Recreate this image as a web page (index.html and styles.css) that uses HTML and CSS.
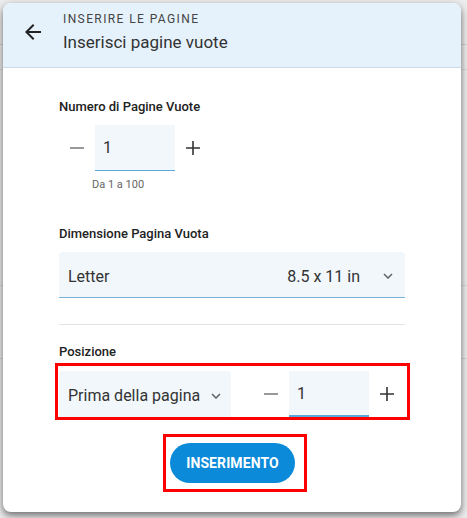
FILE: index.html
```html
<!DOCTYPE html>
<html lang="it">
<head>
<meta charset="utf-8">
<title>Inserisci pagine vuote</title>
<link rel="stylesheet" href="styles.css">
</head>
<body>
<div class="dialog">
  <header class="dialog-header">
    <button class="back-btn" aria-label="Indietro">
      <svg width="24" height="24" viewBox="0 0 24 24"><path d="M20 11H7.83l5.59-5.59L12 4l-8 8 8 8 1.41-1.41L7.83 13H20v-2z" fill="#222"/></svg>
    </button>
    <div class="header-text">
      <div class="overline">INSERIRE LE PAGINE</div>
      <div class="title">Inserisci pagine vuote</div>
    </div>
  </header>
  <div class="dialog-body">
    <div class="field-label label-first">Numero di Pagine Vuote</div>
    <div class="stepper">
      <button class="step-btn" aria-label="Meno">
        <svg width="14" height="14" viewBox="0 0 14 14"><path d="M0 7h14" stroke="#777" stroke-width="1.6"/></svg>
      </button>
      <div class="num-input"><span>1</span></div>
      <button class="step-btn" aria-label="Più">
        <svg width="14" height="14" viewBox="0 0 14 14"><path d="M0 7h14M7 0v14" stroke="#333" stroke-width="1.6"/></svg>
      </button>
    </div>
    <div class="hint">Da 1 a 100</div>

    <div class="field-label label-second">Dimensione Pagina Vuota</div>
    <div class="select select-wide">
      <span class="select-value">Letter</span>
      <span class="select-extra">8.5 x 11 in</span>
      <svg class="chev" width="10" height="6" viewBox="0 0 10 6"><path d="M1 1l4 4 4-4" stroke="#666" stroke-width="1.6" fill="none"/></svg>
    </div>

    <div class="divider"></div>

    <div class="field-label label-third">Posizione</div>
    <div class="highlight position-row">
      <div class="select select-narrow">
        <span class="select-value">Prima della pagina</span>
        <svg class="chev" width="10" height="6" viewBox="0 0 10 6"><path d="M1 1l4 4 4-4" stroke="#666" stroke-width="1.6" fill="none"/></svg>
      </div>
      <div class="stepper stepper-inline">
        <button class="step-btn" aria-label="Meno">
          <svg width="14" height="14" viewBox="0 0 14 14"><path d="M0 7h14" stroke="#777" stroke-width="1.6"/></svg>
        </button>
        <div class="num-input"><span>1</span></div>
        <button class="step-btn" aria-label="Più">
          <svg width="14" height="14" viewBox="0 0 14 14"><path d="M0 7h14M7 0v14" stroke="#333" stroke-width="1.6"/></svg>
        </button>
      </div>
    </div>

    <div class="actions">
      <div class="highlight btn-wrap">
        <button class="primary-btn">INSERIMENTO</button>
      </div>
    </div>
  </div>
</div>
</body>
</html>
```

FILE: styles.css
```css
* { box-sizing: border-box; }
html, body { margin: 0; padding: 0; }
body {
  width: 467px;
  height: 518px;
  overflow: hidden;
  font-family: Roboto, "Liberation Sans", sans-serif;
  background-color: #ececec;
  background-image:
    linear-gradient(#d4d4d4, #d4d4d4),
    linear-gradient(#d9d9d9, #d9d9d9),
    linear-gradient(#d9d9d9, #d9d9d9),
    linear-gradient(#d9d9d9, #d9d9d9);
  background-size: 100% 1px, 100% 1px, 100% 1px, 100% 1px;
  background-position: 0 44px, 0 69px, 0 285px, 0 358px;
  background-repeat: no-repeat;
  padding: 3px 0 0 3px;
}
button { font-family: inherit; border: 0; background: none; padding: 0; cursor: pointer; }

.dialog {
  width: 458px;
  height: 509px;
  background: #fff;
  border-radius: 8px;
  box-shadow: 0 3px 6px rgba(0,0,0,0.35), 0 4px 10px rgba(0,0,0,0.25);
  overflow: hidden;
  display: flex;
  flex-direction: column;
}

.dialog-header {
  height: 65px;
  background: #e5f2fc;
  border-bottom: 1px solid #c9dbe9;
  display: flex;
  align-items: flex-start;
  padding-top: 8px;
}
.back-btn {
  width: 24px;
  height: 24px;
  margin: 9px 0 0 18px;
  display: flex;
}
.header-text { margin-left: 18px; }
.overline {
  font-size: 12px;
  line-height: 16px;
  letter-spacing: 1.4px;
  color: #444;
}
.title {
  margin-top: 5px;
  font-size: 17px;
  line-height: 21px;
  color: #333;
}

.dialog-body {
  padding: 31px 56px 0 56px;
  display: flex;
  flex-direction: column;
}
.field-label {
  font-size: 13px;
  line-height: 16px;
  font-weight: 500;
  color: #222;
}
.label-second { margin-top: 34px; }
.label-third { margin-top: 19px; }

.stepper {
  display: flex;
  align-items: center;
  margin-top: 10px;
  height: 46px;
}
.step-btn {
  width: 36px;
  height: 46px;
  display: flex;
  align-items: center;
  justify-content: center;
}
.num-input {
  width: 80px;
  height: 46px;
  background: #f2f7fc;
  border-bottom: 1px solid #5aa9dc;
  display: flex;
  align-items: center;
  padding: 0 8px 0;
  font-size: 16px;
  color: #333;
}
.hint {
  margin: 7px 0 0 33px;
  font-size: 11px;
  line-height: 14px;
  color: #666;
}

.select {
  height: 46px;
  background: #f2f7fc;
  border-radius: 4px 4px 0 0;
  display: flex;
  align-items: center;
  padding: 3px 12px 0 9px;
  font-size: 16px;
  color: #333;
}
.select-wide {
  margin-top: 10px;
  border-bottom: 1px solid #79b2d6;
}
.select-value { flex: 1; }
.select-extra { margin-right: 23px; }
.chev { flex: none; }

.divider {
  margin-top: 26px;
  height: 1px;
  background: #e3e3e3;
}

.highlight { border: 3px solid #f00; }
.position-row {
  margin: 3px 0 0 -4px;
  width: 355px;
  height: 57px;
  padding: 5px 0 0 1px;
  display: flex;
  align-items: flex-start;
}
.select-narrow {
  width: 172px;
  height: 46px;
  padding: 3px 10px 0 9px;
}
.select-narrow .select-value { flex: 1; }
.stepper-inline {
  margin: 0 0 0 22px;
}
.stepper-inline .num-input { border-bottom-width: 2px; }

.actions {
  display: flex;
  justify-content: center;
  margin-top: 14px;
  padding-left: 6px;
}
.btn-wrap {
  padding: 6px 9px 6px 4px;
}
.primary-btn {
  width: 125px;
  height: 40px;
  border-radius: 20px;
  background: #0b8ad9;
  color: #fff;
  font-size: 14px;
  font-weight: 700;
  letter-spacing: 0.1px;
  display: flex;
  align-items: center;
  justify-content: center;
}
```
